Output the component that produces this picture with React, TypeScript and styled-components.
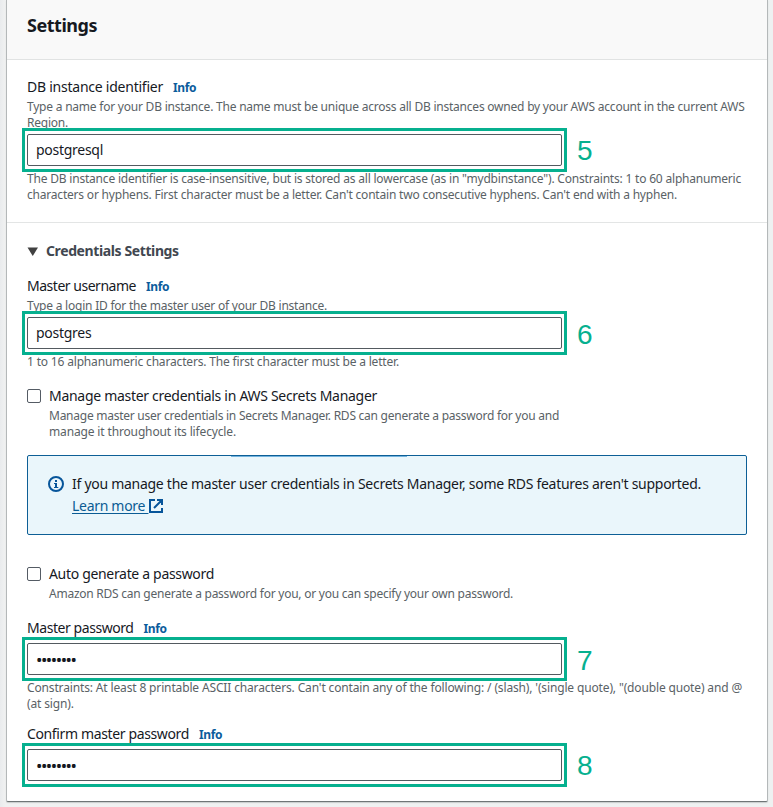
import React from 'react';
import styled, { createGlobalStyle } from 'styled-components';

const Global = createGlobalStyle`
  * { box-sizing: border-box; }
  body { margin: 0; background: #eceeee; }
`;

const Page = styled.main`
  height: 807px;
  padding: 0 5px 5px 6px;
  overflow: hidden;
  background: linear-gradient(90deg, #e9ebed 0, #f0f1f1 5px, #eef1f1 100%);
  font-family: 'Noto Sans', 'Open Sans', sans-serif;
  color: #16191f;
`;

const Card = styled.section`
  height: 802px;
  background: #fff;
  border: 1px solid #b4b8b9;
  border-top: 0;
  border-bottom: 1px solid #6f7576;
  border-radius: 0 0 2px 2px;
  box-shadow: 0 1px 1px #c8cccc;
`;

const CardHeader = styled.header`
  height: 60px;
  padding: 12px 20px 0;
  background: #f9f9f9;
  border-bottom: 1px solid #e1e3e3;
`;

const Title = styled.h2`
  margin: 0;
  font-size: 18px;
  line-height: 26px;
  font-weight: 700;
  letter-spacing: -0.47px;
`;

const Group = styled.div<{ $divided?: boolean }>`
  padding: 16px 20px 0;
  ${(p) => p.$divided && 'height: 163px; border-bottom: 1px solid #e3e5e5;'}
`;

const GroupHeading = styled.h3`
  display: flex;
  align-items: center;
  gap: 8px;
  margin: 1px 0 13px;
  font-size: 14px;
  line-height: 22px;
  font-weight: 700;
  letter-spacing: -0.39px;
  color: #414750;
`;

const Field = styled.div<{ $space?: number }>`
  margin-bottom: ${(p) => p.$space ?? 0}px;
`;

const Label = styled.div<{ $spacing: number }>`
  display: flex;
  align-items: center;
  gap: 10px;
  height: 22px;
  font-size: 14px;
  line-height: 22px;
  white-space: nowrap;
  letter-spacing: ${(p) => p.$spacing}px;
`;

const InfoLink = styled.a`
  padding-top: 1px;
  font-size: 12px;
  font-weight: 700;
  letter-spacing: -0.4px;
  color: #0b5c9c;
`;

const Hint = styled.div<{ $spacing: number }>`
  height: 16px;
  font-size: 12px;
  line-height: 18px;
  white-space: nowrap;
  letter-spacing: ${(p) => p.$spacing}px;
  color: #5a6266;
`;

const InputRow = styled.div`
  display: flex;
  align-items: center;
  gap: 15px;
  height: 32px;
  margin: 4px 0;
`;

const InputFrame = styled.div`
  position: relative;
  width: 535px;
  &::after {
    content: '';
    position: absolute;
    inset: -6px -5px -6px -5px;
    border: 3px solid #06b08f;
  }
`;

const InputBox = styled.div<{ $secret?: boolean }>`
  height: 32px;
  padding: 0 8px;
  border: 1px solid #535a60;
  border-radius: 2px;
  background: #fff;
  font-size: ${(p) => (p.$secret ? 17 : 14)}px;
  line-height: ${(p) => (p.$secret ? 32 : 29)}px;
  letter-spacing: ${(p) => (p.$secret ? -1.46 : -0.28)}px;
`;

const Step = styled.span<{ $drop?: number }>`
  padding-top: ${(p) => p.$drop ?? 1}px;
  font: 28px/32px 'Liberation Sans', Arial, sans-serif;
  color: #06b08f;
`;

const CheckRow = styled.div<{ $space: number }>`
  display: flex;
  gap: 8px;
  margin-bottom: ${(p) => p.$space}px;
`;

const Checkbox = styled.span`
  flex: none;
  width: 14px;
  height: 14px;
  margin-top: 4px;
  border: 1px solid #545b64;
  border-radius: 2px;
  background: #fff;
`;

const Alert = styled.aside`
  position: relative;
  display: flex;
  gap: 8px;
  height: 80px;
  margin-bottom: 28px;
  padding: 17px 20px;
  border: 1px solid #0d5f96;
  border-radius: 2px;
  background: #eaf6fb;
  font-size: 14px;
  line-height: 22px;
  svg { flex: none; }
`;

const AlertSheen = styled.span`
  position: absolute;
  top: 0;
  left: 203px;
  width: 176px;
  height: 1px;
  background: #73b3de;
`;

const AlertIcon = styled.svg`
  margin-top: 3px;
`;

const AlertText = styled.div`
  white-space: nowrap;
  letter-spacing: -0.275px;
`;

const LearnMore = styled.a`
  display: flex;
  align-items: center;
  color: #0b5c94;
  span {
    letter-spacing: -0.3px;
    white-space: pre;
    text-decoration: underline;
    text-underline-offset: 2px;
  }
`;

interface EntryProps {
  value: string;
  step: string;
  secret?: boolean;
  drop?: number;
}

function Entry({ value, step, secret, drop }: EntryProps) {
  return (
    <InputRow>
      <InputFrame>
        <InputBox $secret={secret}>{value}</InputBox>
      </InputFrame>
      <Step $drop={drop}>{step}</Step>
    </InputRow>
  );
}

export default function App() {
  return (
    <Page>
      <Global />
      <Card>
        <CardHeader>
          <Title>Settings</Title>
        </CardHeader>
        <Group $divided>
          <Label $spacing={-0.24}>
            DB instance identifier <InfoLink>Info</InfoLink>
          </Label>
          <Hint $spacing={-0.221}>
            Type a name for your DB instance. The name must be unique across all DB instances owned by your AWS account in the current AWS
          </Hint>
          <Hint $spacing={-0.221}>Region.</Hint>
          <Entry value="postgresql" step="5" />
          <Hint $spacing={-0.198}>
            The DB instance identifier is case-insensitive, but is stored as all lowercase (as in "mydbinstance"). Constraints: 1 to 60 alphanumeric
          </Hint>
          <Hint $spacing={-0.2}>
            characters or hyphens. First character must be a letter. Can't contain two consecutive hyphens. Can't end with a hyphen.
          </Hint>
        </Group>
        <Group>
          <GroupHeading>
            <svg width="11" height="9" viewBox="0 0 11 9">
              <path d="M.5 .5h10.5L5.75 9z" fill="#414141" />
            </svg>
            Credentials Settings
          </GroupHeading>
          <Field $space={16}>
            <Label $spacing={-0.477}>
              Master username <InfoLink>Info</InfoLink>
            </Label>
            <Hint $spacing={-0.224}>Type a login ID for the master user of your DB instance.</Hint>
            <Entry value="postgres" step="6" drop={3} />
            <Hint $spacing={-0.172}>1 to 16 alphanumeric characters. The first character must be a letter.</Hint>
          </Field>
          <CheckRow $space={16}>
            <Checkbox />
            <div>
              <Label $spacing={-0.293}>Manage master credentials in AWS Secrets Manager</Label>
              <Hint $spacing={-0.253}>
                Manage master user credentials in Secrets Manager. RDS can generate a password for you and
              </Hint>
              <Hint $spacing={-0.145}>manage it throughout its lifecycle.</Hint>
            </div>
          </CheckRow>
          <Alert>
            <AlertSheen />
            <AlertIcon width="16" height="16" viewBox="0 0 16 16" fill="none">
              <circle cx="8" cy="8" r="7" stroke="#07559a" strokeWidth="2" />
              <path d="M7 4h2v2H7zM6 7h3v4h1.3v1H6v-1h1V8H6z" fill="#07559a" />
            </AlertIcon>
            <AlertText>
              If you manage the master user credentials in Secrets Manager, some RDS features aren't supported.
              <LearnMore>
                <span>Learn more </span>
                <svg width="16" height="16" viewBox="0 0 16 16" fill="none" stroke="#07559a" strokeWidth="2">
                  <path d="M7 2H2v12h12V10M9 2h5v5M14 2 6 10" />
                </svg>
              </LearnMore>
            </AlertText>
          </Alert>
          <CheckRow $space={16}>
            <Checkbox />
            <div>
              <Label $spacing={-0.322}>Auto generate a password</Label>
              <Hint $spacing={-0.245}>
                Amazon RDS can generate a password for you, or you can specify your own password.
              </Hint>
            </div>
          </CheckRow>
          <Field $space={12}>
            <Label $spacing={-0.439}>
              Master password <InfoLink>Info</InfoLink>
            </Label>
            <Entry value="••••••••" step="7" secret drop={3} />
            <Hint $spacing={-0.146}>
              Constraints: At least 8 printable ASCII characters. Can't contain any of the following: / (slash), '(single quote), "(double quote) and @
            </Hint>
            <Hint $spacing={-0.146}>(at sign).</Hint>
          </Field>
          <Field>
            <Label $spacing={-0.365}>
              Confirm master password <InfoLink>Info</InfoLink>
            </Label>
            <Entry value="••••••••" step="8" secret />
          </Field>
        </Group>
      </Card>
    </Page>
  );
}
